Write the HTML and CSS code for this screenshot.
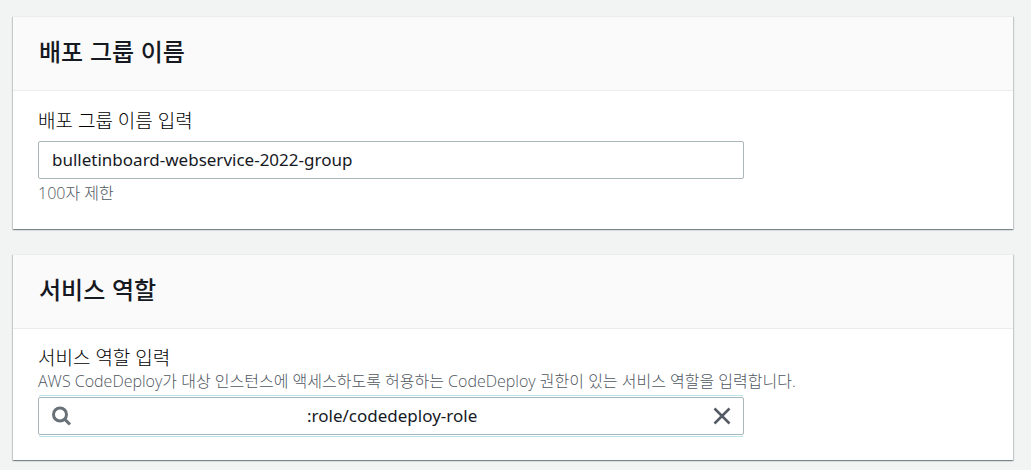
FILE: index.html
```html
<!DOCTYPE html>
<html lang="ko">
<head>
    <meta charset="UTF-8">
    <meta name="viewport" content="width=device-width, initial-scale=1.0">
    <title>배포 그룹 생성</title>
    <link rel="stylesheet" href="styles.css">
</head>
<body>
    <main class="page">
        <section class="panel">
            <header class="panel-header">
                <h2>배포 그룹 이름</h2>
            </header>
            <div class="panel-body">
                <label for="groupName">배포 그룹 이름 입력</label>
                <div class="field">
                    <input type="text" id="groupName" value="bulletinboard-webservice-2022-group" maxlength="100">
                </div>
                <p class="hint">100자 제한</p>
            </div>
        </section>

        <section class="panel">
            <header class="panel-header">
                <h2>서비스 역할</h2>
            </header>
            <div class="panel-body role">
                <label for="serviceRole">서비스 역할 입력</label>
                <p class="hint">AWS CodeDeploy가 대상 인스턴스에 액세스하도록 허용하는 CodeDeploy 권한이 있는 서비스 역할을 입력합니다.</p>
                <div class="field search">
                    <svg class="icon" viewBox="0 0 20 20" aria-hidden="true">
                        <circle cx="8" cy="8.5" r="6.5"/>
                        <path d="M12.6 13.1L18 18.5"/>
                    </svg>
                    <input type="text" id="serviceRole" value=":role/codedeploy-role">
                    <button type="button" class="clear" aria-label="지우기">
                        <svg viewBox="0 0 18 18" aria-hidden="true">
                            <path d="M1.5 1.5L16.5 16.5M16.5 1.5L1.5 16.5"/>
                        </svg>
                    </button>
                </div>
            </div>
        </section>
    </main>
</body>
</html>
```

FILE: styles.css
```css
* {
    box-sizing: border-box;
}
body {
    margin: 0;
    background-color: #f2f3f3;
    color: #16191f;
    font-family: "Noto Sans", "Noto Sans CJK KR", sans-serif;
}
.page {
    display: flex;
    flex-direction: column;
    gap: 25px;
    padding: 16px 18px 9px 13px;
}
.panel {
    background-color: #fff;
    border-top: 1px solid #eaeded;
    box-shadow: 0 1px 1px 0 rgba(0, 28, 36, 0.3),
        1px 1px 1px 0 rgba(0, 28, 36, 0.15),
        -1px 1px 1px 0 rgba(0, 28, 36, 0.15);
}
.panel-header {
    padding: 16px 26px 21px;
    background-color: #fafafa;
    border-bottom: 1px solid #eaeded;
}
h2 {
    margin: 0;
    font-size: 24px;
    font-weight: 500;
    line-height: 36px;
    font-family: "Noto Sans CJK KR", sans-serif;
}
.panel-body {
    padding: 17px 25px 26px;
}
label {
    display: block;
    color: #000;
    font-size: 19px;
    font-weight: 300;
    line-height: 26px;
    font-family: "Open Sans", "Noto Sans CJK KR", sans-serif;
}
.hint {
    margin: 0;
    color: #4f575f;
    font-family: "Open Sans", "Noto Sans CJK KR", sans-serif;
    font-size: 16px;
    font-weight: 300;
    line-height: 20px;
}
.field {
    display: flex;
    align-items: center;
    width: 100%;
    max-width: 706px;
    height: 38px;
    margin: 7px 0 4px;
    padding: 0 12px 0 13px;
    background-color: #fff;
    border: 1px solid #aab7b8;
    border-radius: 2px;
}
.field input {
    flex: 1;
    min-width: 0;
    padding: 0 0 2px;
    border: none;
    outline: none;
    background: none;
    color: inherit;
    font-family: inherit;
    font-size: 17px;
}
.role {
    padding: 16px 25px 25px;
}
.role .field {
    margin: 6px 0 0;
    box-shadow: 0 2px 0 -1px #fff, 0 -2px 0 -1px #fff,
        0 3px 0 -1px #b9e4ec, 0 -3px 0 -1px #b9e4ec;
}
.field.search input {
    padding-left: 235px;
}
svg {
    display: block;
    width: 18px;
    height: 18px;
    fill: none;
    stroke: #545b64;
    stroke-width: 2.5;
}
.icon {
    width: 20px;
    height: 20px;
    stroke: #687078;
    stroke-width: 3;
}
.clear {
    padding: 0;
    border: none;
    background: none;
    cursor: pointer;
}
```
